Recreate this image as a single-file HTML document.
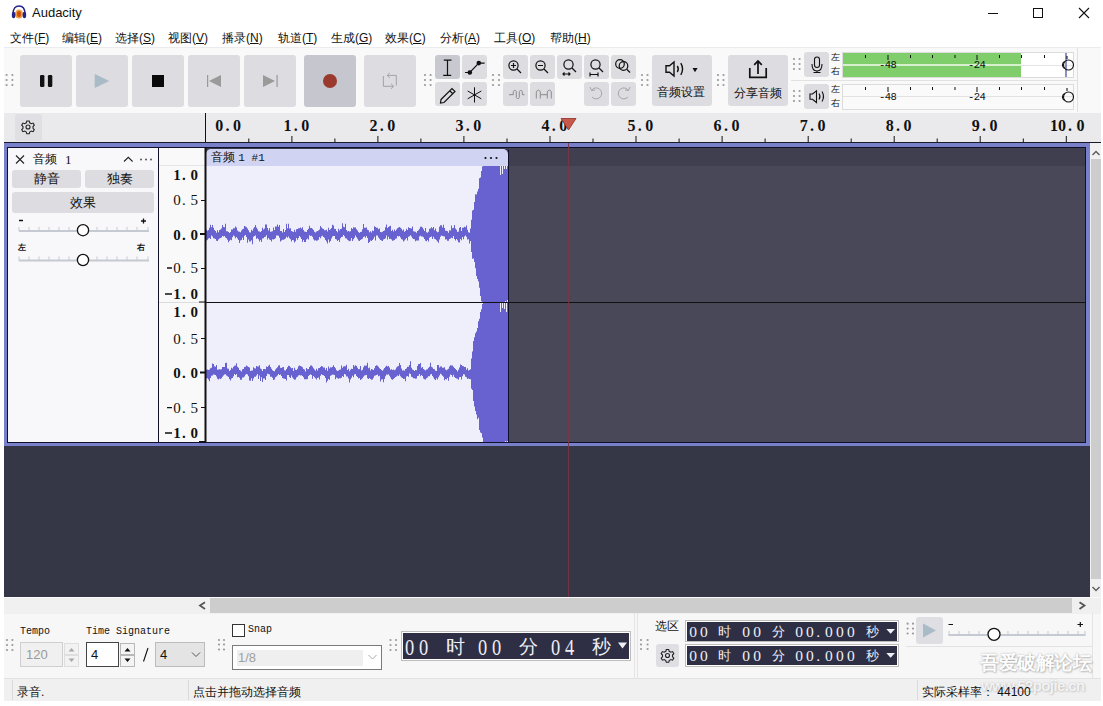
<!DOCTYPE html>
<html><head><meta charset="utf-8">
<style>
*{box-sizing:border-box}
html,body{margin:0;padding:0}
body{width:1103px;height:706px;overflow:hidden;background:#fff;position:relative;font-family:"Liberation Sans",sans-serif;color:#111}
.a{position:absolute}
.btn{position:absolute;background:#dcdce1;border-radius:3px}
.grip{position:absolute;width:8px;height:14px;background-image:radial-gradient(circle,#8a8a8a 0.9px,transparent 1.1px);background-size:5.5px 5px;background-position:0 0}
.menu span{position:absolute;top:31px;font-size:12px;line-height:14px;white-space:nowrap}
svg{position:absolute;overflow:visible}
i.c{display:inline-block;width:1em;text-align:center;font-style:normal}
.rl{position:absolute;top:114px;font-family:"Liberation Serif",serif;font-weight:bold;font-size:16px;line-height:24px;color:#111;white-space:nowrap}
.vl{position:absolute;font-family:"Liberation Mono",monospace;font-size:14.5px;line-height:14px;color:#111;white-space:nowrap;text-align:right;width:44px;left:156px}
.vl.b{font-weight:bold}
.vc{position:absolute;font-family:"Liberation Serif",serif;font-size:15px;line-height:20px;color:#111}
.td{font-family:"Liberation Serif",serif;color:#eeeef4;white-space:nowrap}
.tc{color:#eeeef4;white-space:nowrap}
</style></head><body>
<!-- TITLE BAR -->
<svg class="a" style="left:11px;top:5px" width="16" height="14" viewBox="0 0 16 14">
  <ellipse cx="8" cy="9" rx="4" ry="4.5" fill="#f0a040"/>
  <ellipse cx="8" cy="9" rx="2" ry="3" fill="#d05010"/>
  <path d="M2 9 C2 3 5 1 8 1 C11 1 14 3 14 9" fill="none" stroke="#24248a" stroke-width="1.6"/>
  <ellipse cx="2.6" cy="10" rx="1.8" ry="3.2" fill="#24248a"/>
  <ellipse cx="13.4" cy="10" rx="1.8" ry="3.2" fill="#24248a"/>
</svg>
<div class="a" style="left:32px;top:5px;font-size:13px;line-height:16px;color:#111">Audacity</div>
<div class="a" style="left:988px;top:13px;width:10px;height:1px;background:#111"></div>
<div class="a" style="left:1033px;top:8px;width:10px;height:10px;border:1px solid #111"></div>
<svg style="left:1079px;top:8px" width="10" height="10"><path d="M0 0L10 10M10 0L0 10" stroke="#111" stroke-width="1.1"/></svg>

<!-- MENU -->
<div class="menu">
<span style="left:10px"><i class="c">文</i><i class="c">件</i>(<u>F</u>)</span>
<span style="left:62px"><i class="c">编</i><i class="c">辑</i>(<u>E</u>)</span>
<span style="left:115px"><i class="c">选</i><i class="c">择</i>(<u>S</u>)</span>
<span style="left:168px"><i class="c">视</i><i class="c">图</i>(<u>V</u>)</span>
<span style="left:222px"><i class="c">播</i><i class="c">录</i>(<u>N</u>)</span>
<span style="left:278px"><i class="c">轨</i><i class="c">道</i>(<u>T</u>)</span>
<span style="left:331px"><i class="c">生</i><i class="c">成</i>(<u>G</u>)</span>
<span style="left:385px"><i class="c">效</i><i class="c">果</i>(<u>C</u>)</span>
<span style="left:440px"><i class="c">分</i><i class="c">析</i>(<u>A</u>)</span>
<span style="left:494px"><i class="c">工</i><i class="c">具</i>(<u>O</u>)</span>
<span style="left:550px"><i class="c">帮</i><i class="c">助</i>(<u>H</u>)</span>
</div>

<!-- TOOLBAR AREA -->
<div class="a" style="left:4px;top:47px;width:1097px;height:66px;background:#f9f9fa;border-top:1px solid #ececee"></div>
<!-- grips -->
<svg style="left:0;top:0" width="1103" height="706">
<g fill="#9a9a9a">
<circle cx="6.6" cy="75" r="1.1"/><circle cx="12.4" cy="75" r="1.1"/><circle cx="6.6" cy="80" r="1.1"/><circle cx="12.4" cy="80" r="1.1"/><circle cx="6.6" cy="85" r="1.1"/><circle cx="12.4" cy="85" r="1.1"/>
<circle cx="425" cy="75" r="1.1"/><circle cx="430.6" cy="75" r="1.1"/><circle cx="425" cy="80" r="1.1"/><circle cx="430.6" cy="80" r="1.1"/><circle cx="425" cy="85" r="1.1"/><circle cx="430.6" cy="85" r="1.1"/>
<circle cx="493" cy="75" r="1.1"/><circle cx="499" cy="75" r="1.1"/><circle cx="493" cy="80" r="1.1"/><circle cx="499" cy="80" r="1.1"/><circle cx="493" cy="85" r="1.1"/><circle cx="499" cy="85" r="1.1"/>
<circle cx="642" cy="75" r="1.1"/><circle cx="647.5" cy="75" r="1.1"/><circle cx="642" cy="80" r="1.1"/><circle cx="647.5" cy="80" r="1.1"/><circle cx="642" cy="85" r="1.1"/><circle cx="647.5" cy="85" r="1.1"/>
<circle cx="718" cy="75" r="1.1"/><circle cx="723.5" cy="75" r="1.1"/><circle cx="718" cy="80" r="1.1"/><circle cx="723.5" cy="80" r="1.1"/><circle cx="718" cy="85" r="1.1"/><circle cx="723.5" cy="85" r="1.1"/>
<circle cx="794" cy="59" r="1.1"/><circle cx="799.6" cy="59" r="1.1"/><circle cx="794" cy="64" r="1.1"/><circle cx="799.6" cy="64" r="1.1"/><circle cx="794" cy="69" r="1.1"/><circle cx="799.6" cy="69" r="1.1"/>
<circle cx="794" cy="91" r="1.1"/><circle cx="799.6" cy="91" r="1.1"/><circle cx="794" cy="96" r="1.1"/><circle cx="799.6" cy="96" r="1.1"/><circle cx="794" cy="101" r="1.1"/><circle cx="799.6" cy="101" r="1.1"/>
</g>
</svg>
<!-- transport buttons -->
<div class="btn" style="left:20px;top:55px;width:52px;height:52px"></div>
<div class="btn" style="left:76px;top:55px;width:52px;height:52px"></div>
<div class="btn" style="left:132px;top:55px;width:52px;height:52px"></div>
<div class="btn" style="left:188px;top:55px;width:52px;height:52px"></div>
<div class="btn" style="left:244px;top:55px;width:52px;height:52px"></div>
<div class="btn" style="left:304px;top:55px;width:52px;height:52px;background:#c6c6ce"></div>
<div class="btn" style="left:364px;top:55px;width:52px;height:52px"></div>
<svg style="left:0;top:0" width="1103" height="706">
<rect x="40" y="75" width="4.4" height="12" rx="1.3" fill="#111"/>
<rect x="47.9" y="75" width="4.4" height="12" rx="1.3" fill="#111"/>
<path d="M94.7 74 L109.3 81 L94.7 88 Z" fill="#a9bbc7"/>
<rect x="152" y="75" width="12" height="12" fill="#0a0a0a"/>
<rect x="207" y="75" width="1.2" height="12" fill="#9a9a9a"/>
<path d="M221 75 L209 81 L221 87 Z" fill="#9a9a9a"/>
<path d="M263 75 L275 81 L263 87 Z" fill="#9a9a9a"/>
<rect x="276.5" y="75" width="1.2" height="12" fill="#9a9a9a"/>
<circle cx="330" cy="81" r="7" fill="#9a3a2e"/>
<g fill="none" stroke="#a8a8a8" stroke-width="1">
<path d="M383.4 76 V86.3 H393.6 M391 83.8 L393.6 86.3 L391 88.8 M396.3 85.6 V75.4 H387.2 M389.8 72.9 L387.2 75.4 L389.8 77.9" stroke="#a4a4a4" stroke-width="1"/>
</g>
</svg>
<!-- tools -->
<div class="btn" style="left:435px;top:55px;width:25px;height:24px;background:#c8c8d0"></div>
<div class="btn" style="left:462px;top:55px;width:25px;height:24px"></div>
<div class="btn" style="left:435px;top:82px;width:25px;height:24px"></div>
<div class="btn" style="left:462px;top:82px;width:25px;height:24px"></div>
<div class="btn" style="left:503px;top:55px;width:25px;height:24px"></div>
<div class="btn" style="left:530px;top:55px;width:25px;height:24px"></div>
<div class="btn" style="left:557px;top:55px;width:25px;height:24px"></div>
<div class="btn" style="left:584px;top:55px;width:25px;height:24px"></div>
<div class="btn" style="left:611px;top:55px;width:25px;height:24px"></div>
<div class="btn" style="left:503px;top:82px;width:25px;height:24px"></div>
<div class="btn" style="left:530px;top:82px;width:25px;height:24px"></div>
<div class="btn" style="left:584px;top:82px;width:25px;height:24px"></div>
<div class="btn" style="left:611px;top:82px;width:25px;height:24px"></div>
<svg style="left:0;top:0" width="1103" height="706">
<g fill="none" stroke="#111" stroke-width="1.2">
<path d="M443.8 60.2 H451.5 M443.2 75.4 H451.2 M447.5 60.2 V75.4"/>
<path d="M465 72.5 H469.8 L478.8 63.1 H484.6"/>
<path d="M441 99.5 L452 88.5 L455 91.5 L444 102.5 L440.5 103 Z M449.5 90.5 L452.5 93.5"/>
<path d="M474.5 87.3 V102.5 M467.7 91 L481.3 98.8 M481.3 91 L467.7 98.8" stroke-width="1"/>
<circle cx="513.5" cy="65.5" r="4.6"/><path d="M517 69 L521 73 M511 65.5 H516 M513.5 63 V68"/>
<circle cx="540.5" cy="65.5" r="4.6"/><path d="M544 69 L548 73 M538 65.5 H543"/>
<circle cx="568.5" cy="64.5" r="4.6"/><path d="M572 68 L576 72 M563 74 H570 M564.5 72.5 L563 74 L564.5 75.5 M568.5 72.5 L570 74 L568.5 75.5"/>
<circle cx="595.5" cy="64.5" r="4.6"/><path d="M599 68 L603 72 M590 74.5 H598 M590 72.5 V76.5 M598 72.5 V76.5"/>
<circle cx="620" cy="64" r="4.3"/><circle cx="623.5" cy="66" r="4.3"/><path d="M627 69.5 L630 72.5"/>
</g>
<circle cx="469.8" cy="72.5" r="2.3" fill="#111"/><circle cx="478.8" cy="63.1" r="2.3" fill="#111"/>
<g fill="none" stroke="#a8a8a8" stroke-width="1">
<path d="M509 94.7H513.3V91.5Q514.8 88.5 516.3 91.5V97.5Q517.8 100.5 519.3 97.5V91.5Q520.8 88.5 522.3 91.5V94.7H524.5" stroke="#8c8c8c"/>
<path d="M536.3 98.5V91.5Q538.3 88.5 540.3 91.5V98.5M540.3 94.7H547.3M547.3 98.5V91.5Q549.3 88.5 551.3 91.5V98.5" stroke="#8c8c8c"/>
<path d="M592 97 A 5.5 5.5 0 1 0 591.5 90.5 M590 87 L591.5 90.5 L595 90"/>
<path d="M628 97 A 5.5 5.5 0 1 1 628.5 90.5 M630 87 L628.5 90.5 L625 90"/>
</g>
</svg>
<!-- audio setup / share -->
<div class="btn" style="left:652px;top:55px;width:60px;height:51px"></div>
<div class="btn" style="left:728px;top:55px;width:60px;height:51px"></div>
<svg style="left:0;top:0" width="1103" height="706">
<g fill="none" stroke="#111" stroke-width="1.2">
<path d="M666 65.8 H669.5 L674 62 V76 L669.5 72.2 H666 Z" stroke-width="1.4"/>
<path d="M677.3 66 Q679.3 69 677.3 72 M680.8 63.2 Q684.3 69 680.8 74.8" stroke-width="1.4"/>
<path d="M749.8 68 V77.3 H766.2 V68 M758 74 V61 M754.2 64.8 L758 61 L761.8 64.8" stroke-width="1.7"/>
</g>
<path d="M692.5 68 H697.6 L695 72.3 Z" fill="#111"/>
</svg>
<div class="a" style="left:657px;top:85px;font-size:12px;line-height:14px"><i class="c">音</i><i class="c">频</i><i class="c">设</i><i class="c">置</i></div>
<div class="a" style="left:734px;top:86px;font-size:12px;line-height:14px"><i class="c">分</i><i class="c">享</i><i class="c">音</i><i class="c">频</i></div>
<!-- meters -->
<div class="a" style="left:791px;top:80px;width:287px;height:1px;background:#e2e2e4"></div>
<div class="a" style="left:1077px;top:48px;width:1px;height:64px;background:#e0e0e2"></div>
<div class="btn" style="left:804px;top:52px;width:25px;height:25px"></div>
<div class="btn" style="left:804px;top:84px;width:25px;height:25px"></div>
<div class="a" style="left:842px;top:52px;width:232px;height:26px;border:1px solid #dcdcdc;background:#fff"></div>
<div class="a" style="left:842px;top:84px;width:232px;height:26px;border:1px solid #dcdcdc;background:#fafafa"></div>
<div class="a" style="left:843px;top:53px;width:178px;height:11px;background:#80cd6c"></div>
<div class="a" style="left:843px;top:66px;width:178px;height:11px;background:#80cd6c"></div>
<div class="a" style="left:843px;top:64px;width:178px;height:2px;background:#d6f0ce"></div>
<div class="a" style="left:1021px;top:65px;width:52px;height:1px;background:#e4e4e4"></div>
<div class="a" style="left:843px;top:96px;width:230px;height:1px;background:#e2e2e2"></div>
<svg style="left:0;top:0" width="1103" height="706">
<g stroke="#111" stroke-width="1">
<path d="M865.5 55V58 M888 55V60 M910.5 55V58 M932.5 55V58 M955 55V58 M977 55V60 M999.5 55V58 M1021.5 55V58 M1044.5 55V58"/>
<path d="M865.5 87V90 M888 87V92 M910.5 87V90 M932.5 87V90 M955 87V90 M977 87V92 M999.5 87V90 M1021.5 87V90 M1044.5 87V90"/>
</g>
<path d="M1066 53 V77" stroke="#5a64a8" stroke-width="1.4"/>
<g fill="none" stroke="#111" stroke-width="1.1">
<path d="M1067 59 V56"/><circle cx="1068.5" cy="65" r="5"/><path d="M1064.5 61.5 A4 4 0 0 0 1064.5 68.5"/>
<path d="M1067 91 V88"/><circle cx="1068.5" cy="97" r="5"/><path d="M1064.5 93.5 A4 4 0 0 0 1064.5 100.5"/>
</g>
<g fill="none" stroke="#111" stroke-width="1.1">
<rect x="814.5" y="57" width="5" height="10.5" rx="2.5"/>
<path d="M812 64 Q812 71 817 71 Q822 71 822 64 M817 71 V72.5 M813.5 72.5 H820.5"/>
<path d="M810 94 H812.5 L816.5 90.8 V102.5 L812.5 99.3 H810 Z"/>
<path d="M819 93.5 Q821 96.5 819 99.5 M822 91.5 Q825 96.5 822 101.5"/>
</g>
</svg>
<div class="a" style="left:831px;top:52px;font-size:9px;line-height:11px"><i class="c">左</i></div>
<div class="a" style="left:831px;top:66px;font-size:9px;line-height:11px"><i class="c">右</i></div>
<div class="a" style="left:831px;top:84px;font-size:9px;line-height:11px"><i class="c">左</i></div>
<div class="a" style="left:831px;top:98px;font-size:9px;line-height:11px"><i class="c">右</i></div>
<div class="a" style="left:879px;top:60px;font-family:'Liberation Mono',monospace;font-size:10.5px;line-height:11px;letter-spacing:-0.5px">-48</div>
<div class="a" style="left:968px;top:60px;font-family:'Liberation Mono',monospace;font-size:10.5px;line-height:11px;letter-spacing:-0.5px">-24</div>
<div class="a" style="left:879px;top:92px;font-family:'Liberation Mono',monospace;font-size:10.5px;line-height:11px;letter-spacing:-0.5px">-48</div>
<div class="a" style="left:968px;top:92px;font-family:'Liberation Mono',monospace;font-size:10.5px;line-height:11px;letter-spacing:-0.5px">-24</div>

<!-- RULER -->
<div class="a" style="left:4px;top:113px;width:1097px;height:30px;background:#eaeaec"></div>
<div class="btn" style="left:15px;top:114px;width:27px;height:27px;background:#e0e0e4"></div>
<svg style="left:0;top:0" width="1103" height="706">
<g transform="translate(28,127)" fill="none" stroke="#222" stroke-width="1.1">
<path d="M-1.2 -6 h2.4 l0.5 1.8 l1.6 0.9 l1.8 -0.6 l1.2 2.1 l-1.3 1.3 v1.8 l1.3 1.3 l-1.2 2.1 l-1.8 -0.6 l-1.6 0.9 l-0.5 1.8 h-2.4 l-0.5 -1.8 l-1.6 -0.9 l-1.8 0.6 l-1.2 -2.1 l1.3 -1.3 v-1.8 l-1.3 -1.3 l1.2 -2.1 l1.8 0.6 l1.6 -0.9 z"/>
<circle r="2"/>
</g>
<path d="M205.5 113 V143" stroke="#111" stroke-width="1"/>
<rect x="4" y="142" width="1097" height="1.3" fill="#1a1a2a"/>
</svg>
<svg style="left:0;top:0" width="1103" height="706"><path d="M291.9 136V142 M377.9 136V142 M463.9 136V142 M550.0 136V142 M636.0 136V142 M722.1 136V142 M808.2 136V142 M894.2 136V142 M980.2 136V142 M1066.3 136V142 M248.8 138.5V142 M334.9 138.5V142 M420.9 138.5V142 M507.0 138.5V142 M593.0 138.5V142 M679.1 138.5V142 M765.1 138.5V142 M851.2 138.5V142 M937.2 138.5V142 M1023.3 138.5V142" stroke="#111" stroke-width="1"/></svg>
<div class="rl" style="left:215.2px">0</div>
<div class="rl" style="left:225.5px">.</div>
<div class="rl" style="left:233.0px">0</div>
<div class="rl" style="left:283.4px">1</div>
<div class="rl" style="left:293.7px">.</div>
<div class="rl" style="left:301.2px">0</div>
<div class="rl" style="left:369.4px">2</div>
<div class="rl" style="left:379.7px">.</div>
<div class="rl" style="left:387.2px">0</div>
<div class="rl" style="left:455.4px">3</div>
<div class="rl" style="left:465.7px">.</div>
<div class="rl" style="left:473.3px">0</div>
<div class="rl" style="left:541.5px">4</div>
<div class="rl" style="left:551.8px">.</div>
<div class="rl" style="left:559.3px">0</div>
<div class="rl" style="left:627.5px">5</div>
<div class="rl" style="left:637.8px">.</div>
<div class="rl" style="left:645.3px">0</div>
<div class="rl" style="left:713.6px">6</div>
<div class="rl" style="left:723.9px">.</div>
<div class="rl" style="left:731.4px">0</div>
<div class="rl" style="left:799.7px">7</div>
<div class="rl" style="left:810.0px">.</div>
<div class="rl" style="left:817.5px">0</div>
<div class="rl" style="left:885.7px">8</div>
<div class="rl" style="left:896.0px">.</div>
<div class="rl" style="left:903.5px">0</div>
<div class="rl" style="left:971.7px">9</div>
<div class="rl" style="left:982.0px">.</div>
<div class="rl" style="left:989.5px">0</div>
<div class="rl" style="left:1050.1px">1</div>
<div class="rl" style="left:1058.1px">0</div>
<div class="rl" style="left:1067.9px">.</div>
<div class="rl" style="left:1076.5px">0</div>


<!-- TRACK AREA -->
<div class="a" style="left:4px;top:143px;width:1086px;height:303px;background:#7880ca"></div>
<div class="a" style="left:7px;top:147px;width:1079px;height:296px;background:#10102a"></div>
<div class="a" style="left:8px;top:148px;width:150px;height:294px;background:#f8f8fa"></div>
<div class="a" style="left:159px;top:148px;width:46px;height:294px;background:#f9f9fa"></div>
<div class="a" style="left:159px;top:165px;width:46px;height:1px;background:#e6e6e8"></div>
<div class="a" style="left:159px;top:302px;width:46px;height:1px;background:#dcdcdc"></div>
<div class="a" style="left:206px;top:148px;width:302px;height:294px;background:#eeeffb"></div>
<div class="a" style="left:206px;top:148px;width:303px;height:18px;background:#3a3a4c"></div>
<div class="a" style="left:206px;top:149px;width:302px;height:17px;background:#d0d4f2;border-radius:5px 5px 0 0"></div>
<div class="a" style="left:509px;top:148px;width:576px;height:18px;background:#3f3f50"></div>
<div class="a" style="left:509px;top:166px;width:576px;height:276px;background:#484859"></div>
<div class="a" style="left:206px;top:302px;width:879px;height:1px;background:#111"></div>
<div class="a" style="left:508px;top:150px;width:1px;height:292px;background:#10102a"></div>
<!-- empty dark area -->
<div class="a" style="left:4px;top:446px;width:1086px;height:151px;background:#353747"></div>
<!-- vertical scrollbar -->
<div class="a" style="left:1090px;top:143px;width:11px;height:454px;background:#f0f0f0"></div>
<div class="a" style="left:1091px;top:159px;width:10px;height:420px;background:#cdcdcd"></div>
<svg style="left:0;top:0" width="1103" height="706">
<path d="M1092.5 155 L1096 151.5 L1099.5 155" fill="none" stroke="#606060" stroke-width="1.5"/>
<path d="M1092.5 587 L1096 590.5 L1099.5 587" fill="none" stroke="#606060" stroke-width="1.5"/>
</svg>
<!-- play head line -->
<div class="a" style="left:568px;top:143px;width:1px;height:454px;background:#7a3446;opacity:0.9"></div>
<svg style="left:0;top:0" width="1103" height="706">
<path d="M561 118.5 L576 118.5 L568.5 130 Z" fill="#c8584a" stroke="#8a3028" stroke-width="0.8"/>
</svg>
<svg style="left:0;top:0" width="1103" height="706"><path d="M206 229.6h1V240.6h-1ZM207 230.7h1V239.7h-1ZM208 229.9h1V238.5h-1ZM209 227.7h1V237.9h-1ZM210 224.7h1V238.9h-1ZM211 227.3h1V235.6h-1ZM212 225.1h1V236.5h-1ZM213 227.8h1V238.3h-1ZM214 230.0h1V238.6h-1ZM215 230.9h1V239.0h-1ZM216 232.7h1V240.8h-1ZM217 230.3h1V241.0h-1ZM218 232.2h1V239.5h-1ZM219 230.1h1V238.5h-1ZM220 229.5h1V238.0h-1ZM221 228.4h1V237.5h-1ZM222 224.9h1V235.9h-1ZM223 226.9h1V236.6h-1ZM224 227.2h1V235.9h-1ZM225 223.8h1V237.5h-1ZM226 231.2h1V238.2h-1ZM227 231.2h1V239.7h-1ZM228 232.1h1V242.2h-1ZM229 233.0h1V240.7h-1ZM230 231.9h1V239.7h-1ZM231 229.4h1V240.3h-1ZM232 229.4h1V237.2h-1ZM233 228.3h1V235.5h-1ZM234 228.2h1V236.2h-1ZM235 226.4h1V238.3h-1ZM236 227.4h1V237.0h-1ZM237 230.5h1V238.6h-1ZM238 231.4h1V240.0h-1ZM239 231.8h1V243.1h-1ZM240 232.3h1V240.4h-1ZM241 230.5h1V239.9h-1ZM242 229.2h1V237.8h-1ZM243 228.7h1V240.0h-1ZM244 226.0h1V235.8h-1ZM245 226.6h1V235.1h-1ZM246 227.3h1V236.9h-1ZM247 228.5h1V242.7h-1ZM248 230.3h1V239.5h-1ZM249 232.2h1V241.6h-1ZM250 232.5h1V241.4h-1ZM251 229.7h1V240.3h-1ZM252 230.8h1V244.2h-1ZM253 228.5h1V236.7h-1ZM254 227.0h1V236.1h-1ZM255 225.0h1V235.6h-1ZM256 227.5h1V238.7h-1ZM257 229.2h1V238.2h-1ZM258 231.3h1V239.3h-1ZM259 231.5h1V241.6h-1ZM260 232.1h1V240.1h-1ZM261 231.0h1V241.9h-1ZM262 227.7h1V238.5h-1ZM263 229.4h1V238.3h-1ZM264 228.4h1V236.9h-1ZM265 224.5h1V236.8h-1ZM266 224.5h1V235.3h-1ZM267 228.0h1V239.6h-1ZM268 230.6h1V237.9h-1ZM269 228.3h1V239.6h-1ZM270 231.7h1V239.9h-1ZM271 231.4h1V241.4h-1ZM272 231.2h1V239.3h-1ZM273 227.5h1V239.4h-1ZM274 230.1h1V238.9h-1ZM275 226.5h1V238.2h-1ZM276 226.6h1V235.4h-1ZM277 224.4h1V235.4h-1ZM278 226.8h1V235.8h-1ZM279 225.1h1V237.8h-1ZM280 230.9h1V241.4h-1ZM281 231.0h1V240.4h-1ZM282 232.4h1V239.7h-1ZM283 228.9h1V239.8h-1ZM284 231.9h1V239.3h-1ZM285 230.0h1V238.4h-1ZM286 223.7h1V236.8h-1ZM287 228.3h1V237.7h-1ZM288 223.8h1V236.4h-1ZM289 228.4h1V238.3h-1ZM290 228.3h1V239.2h-1ZM291 231.0h1V241.6h-1ZM292 231.6h1V239.9h-1ZM293 231.9h1V240.3h-1ZM294 229.8h1V242.4h-1ZM295 231.8h1V241.3h-1ZM296 229.3h1V238.1h-1ZM297 229.1h1V239.8h-1ZM298 228.3h1V237.9h-1ZM299 228.2h1V236.0h-1ZM300 227.4h1V237.3h-1ZM301 228.5h1V238.9h-1ZM302 227.2h1V241.9h-1ZM303 230.1h1V239.9h-1ZM304 231.5h1V242.0h-1ZM305 231.7h1V241.9h-1ZM306 231.9h1V239.6h-1ZM307 230.0h1V238.6h-1ZM308 228.8h1V239.5h-1ZM309 225.7h1V235.3h-1ZM310 227.9h1V236.1h-1ZM311 228.0h1V235.8h-1ZM312 228.8h1V236.8h-1ZM313 229.9h1V239.2h-1ZM314 231.8h1V240.6h-1ZM315 232.6h1V240.2h-1ZM316 231.6h1V240.7h-1ZM317 230.9h1V240.6h-1ZM318 230.5h1V239.8h-1ZM319 229.6h1V237.0h-1ZM320 226.1h1V238.3h-1ZM321 227.5h1V236.2h-1ZM322 228.4h1V235.8h-1ZM323 228.9h1V237.1h-1ZM324 230.2h1V237.7h-1ZM325 230.3h1V239.9h-1ZM326 229.8h1V241.5h-1ZM327 231.6h1V243.5h-1ZM328 227.7h1V239.6h-1ZM329 229.9h1V242.6h-1ZM330 229.2h1V241.0h-1ZM331 228.1h1V238.6h-1ZM332 224.7h1V236.6h-1ZM333 225.6h1V236.0h-1ZM334 228.7h1V236.1h-1ZM335 229.1h1V239.1h-1ZM336 231.0h1V239.4h-1ZM337 232.3h1V241.0h-1ZM338 228.8h1V240.1h-1ZM339 230.4h1V242.0h-1ZM340 229.0h1V238.3h-1ZM341 228.8h1V237.1h-1ZM342 223.2h1V236.8h-1ZM343 226.7h1V235.1h-1ZM344 227.2h1V236.3h-1ZM345 223.7h1V238.2h-1ZM346 230.1h1V238.6h-1ZM347 231.6h1V239.7h-1ZM348 230.9h1V240.4h-1ZM349 231.6h1V241.2h-1ZM350 231.2h1V240.8h-1ZM351 228.0h1V238.0h-1ZM352 228.9h1V240.9h-1ZM353 227.3h1V239.2h-1ZM354 227.5h1V237.7h-1ZM355 227.5h1V235.6h-1ZM356 229.2h1V237.3h-1ZM357 230.6h1V238.8h-1ZM358 231.9h1V240.4h-1ZM359 232.9h1V241.0h-1ZM360 232.0h1V240.0h-1ZM361 231.8h1V239.3h-1ZM362 229.2h1V238.8h-1ZM363 224.1h1V237.1h-1ZM364 227.7h1V236.5h-1ZM365 227.7h1V237.7h-1ZM366 227.5h1V236.0h-1ZM367 229.7h1V238.0h-1ZM368 230.2h1V243.1h-1ZM369 232.3h1V242.1h-1ZM370 231.3h1V240.6h-1ZM371 232.6h1V240.9h-1ZM372 230.5h1V240.0h-1ZM373 230.9h1V238.7h-1ZM374 226.3h1V236.8h-1ZM375 227.1h1V240.4h-1ZM376 227.7h1V235.6h-1ZM377 227.8h1V235.6h-1ZM378 229.2h1V237.6h-1ZM379 228.4h1V238.8h-1ZM380 231.9h1V239.9h-1ZM381 232.2h1V240.5h-1ZM382 231.8h1V241.0h-1ZM383 230.9h1V239.4h-1ZM384 230.4h1V239.1h-1ZM385 227.2h1V238.3h-1ZM386 224.5h1V235.6h-1ZM387 227.9h1V239.4h-1ZM388 226.9h1V236.7h-1ZM389 226.2h1V239.0h-1ZM390 225.7h1V238.7h-1ZM391 231.1h1V239.6h-1ZM392 229.7h1V240.8h-1ZM393 231.6h1V240.6h-1ZM394 229.5h1V240.1h-1ZM395 230.9h1V238.7h-1ZM396 229.6h1V238.4h-1ZM397 228.3h1V235.9h-1ZM398 227.5h1V236.4h-1ZM399 227.1h1V235.9h-1ZM400 227.8h1V237.4h-1ZM401 228.8h1V239.2h-1ZM402 230.4h1V239.4h-1ZM403 229.4h1V241.4h-1ZM404 231.7h1V240.6h-1ZM405 230.9h1V239.3h-1ZM406 228.7h1V238.1h-1ZM407 230.0h1V240.4h-1ZM408 227.3h1V236.7h-1ZM409 227.9h1V236.2h-1ZM410 228.2h1V235.3h-1ZM411 228.4h1V236.5h-1ZM412 226.5h1V238.3h-1ZM413 231.2h1V239.1h-1ZM414 231.5h1V239.2h-1ZM415 231.7h1V241.2h-1ZM416 232.7h1V240.6h-1ZM417 231.1h1V240.4h-1ZM418 230.2h1V240.6h-1ZM419 228.8h1V236.4h-1ZM420 226.8h1V235.8h-1ZM421 226.7h1V236.5h-1ZM422 227.4h1V236.4h-1ZM423 229.2h1V237.3h-1ZM424 231.0h1V239.0h-1ZM425 228.1h1V240.7h-1ZM426 232.2h1V241.3h-1ZM427 232.7h1V239.9h-1ZM428 231.8h1V241.6h-1ZM429 228.8h1V237.8h-1ZM430 228.5h1V236.9h-1ZM431 227.2h1V236.6h-1ZM432 228.2h1V238.9h-1ZM433 226.9h1V236.7h-1ZM434 230.2h1V238.7h-1ZM435 228.5h1V239.2h-1ZM436 231.3h1V240.2h-1ZM437 232.2h1V241.4h-1ZM438 231.8h1V242.7h-1ZM439 226.8h1V239.5h-1ZM440 225.3h1V236.7h-1ZM441 225.2h1V235.4h-1ZM442 227.5h1V236.1h-1ZM443 224.7h1V236.2h-1ZM444 228.1h1V236.6h-1ZM445 230.7h1V239.6h-1ZM446 230.8h1V239.3h-1ZM447 231.3h1V240.7h-1ZM448 232.7h1V240.8h-1ZM449 230.3h1V239.0h-1ZM450 230.5h1V238.4h-1ZM451 225.5h1V237.7h-1ZM452 228.3h1V238.2h-1ZM453 227.8h1V236.0h-1ZM454 225.0h1V238.9h-1ZM455 228.6h1V240.5h-1ZM456 229.7h1V239.1h-1ZM457 231.9h1V240.2h-1ZM458 231.5h1V242.3h-1ZM459 227.7h1V242.4h-1ZM460 227.0h1V239.0h-1ZM461 230.9h1V240.3h-1ZM462 227.7h1V236.9h-1ZM463 227.8h1V239.3h-1ZM464 226.7h1V236.4h-1ZM465 227.3h1V235.5h-1ZM466 225.4h1V236.8h-1ZM467 229.8h1V239.5h-1ZM468 232.2h1V239.2h-1ZM469 232.7h1V243.4h-1ZM470 230.9h1V241.0h-1ZM470 228.5h1V236.6h-1ZM471 219.7h1V252.0h-1ZM472 210.5h1V258.7h-1ZM473 209.8h1V258.5h-1ZM474 202.0h1V262.1h-1ZM475 194.3h1V268.3h-1ZM476 194.6h1V276.0h-1ZM477 191.6h1V279.1h-1ZM478 188.8h1V281.6h-1ZM479 178.2h1V287.7h-1ZM480 177.5h1V295.9h-1ZM481 171.1h1V301.3h-1ZM482 166.5h1V302.0h-1ZM483 166.0h1V302.0h-1ZM483 166.0h1V302.0h-1ZM484 166.0h1V302.0h-1ZM485 166.0h1V302.0h-1ZM486 166.0h1V302.0h-1ZM487 166.0h1V302.0h-1ZM488 166.0h1V302.0h-1ZM489 166.0h1V302.0h-1ZM490 166.0h1V302.0h-1ZM491 166.0h1V302.0h-1ZM492 166.0h1V302.0h-1ZM493 166.0h1V302.0h-1ZM494 166.0h1V302.0h-1ZM495 166.0h1V302.0h-1ZM496 166.0h1V302.0h-1ZM497 166.0h1V302.0h-1ZM498 166.0h1V302.0h-1ZM499 166.0h1V302.0h-1ZM500 175.0h1V302.0h-1ZM501 166.0h1V302.0h-1ZM502 174.0h1V302.0h-1ZM503 166.0h1V302.0h-1ZM504 169.0h1V302.0h-1ZM505 166.0h1V301.0h-1ZM506 169.0h1V302.0h-1ZM507 166.0h1V300.0h-1ZM206 369.7h1V378.5h-1ZM207 369.6h1V378.2h-1ZM208 369.9h1V379.4h-1ZM209 369.5h1V381.3h-1ZM210 368.3h1V378.0h-1ZM211 367.7h1V375.8h-1ZM212 363.5h1V375.4h-1ZM213 364.0h1V374.4h-1ZM214 366.2h1V374.7h-1ZM215 366.7h1V374.9h-1ZM216 364.9h1V376.6h-1ZM217 369.7h1V378.7h-1ZM218 369.6h1V379.6h-1ZM219 369.3h1V378.5h-1ZM220 369.4h1V378.9h-1ZM221 369.2h1V378.2h-1ZM222 367.0h1V376.7h-1ZM223 367.0h1V375.6h-1ZM224 366.9h1V374.4h-1ZM225 363.1h1V374.3h-1ZM226 362.8h1V375.5h-1ZM227 368.4h1V376.2h-1ZM228 368.8h1V377.0h-1ZM229 371.1h1V378.9h-1ZM230 369.9h1V380.6h-1ZM231 367.8h1V378.6h-1ZM232 368.5h1V378.0h-1ZM233 366.8h1V376.3h-1ZM234 365.8h1V373.9h-1ZM235 365.4h1V375.0h-1ZM236 363.3h1V374.0h-1ZM237 366.8h1V377.3h-1ZM238 367.8h1V376.9h-1ZM239 370.0h1V377.7h-1ZM240 370.5h1V379.7h-1ZM241 371.5h1V379.8h-1ZM242 369.2h1V377.6h-1ZM243 369.1h1V377.6h-1ZM244 367.0h1V376.6h-1ZM245 366.8h1V374.7h-1ZM246 365.5h1V374.0h-1ZM247 366.2h1V374.4h-1ZM248 367.0h1V376.2h-1ZM249 367.5h1V380.4h-1ZM250 370.9h1V380.8h-1ZM251 370.6h1V378.3h-1ZM252 370.5h1V381.0h-1ZM253 367.2h1V378.6h-1ZM254 368.3h1V376.7h-1ZM255 368.4h1V376.7h-1ZM256 366.0h1V375.5h-1ZM257 366.5h1V374.1h-1ZM258 366.6h1V379.0h-1ZM259 365.2h1V375.6h-1ZM260 368.4h1V381.0h-1ZM261 369.2h1V377.2h-1ZM262 371.1h1V382.0h-1ZM263 369.1h1V378.6h-1ZM264 368.9h1V378.4h-1ZM265 369.3h1V380.0h-1ZM266 366.5h1V375.9h-1ZM267 366.9h1V373.8h-1ZM268 365.7h1V374.0h-1ZM269 364.8h1V374.6h-1ZM270 366.9h1V376.8h-1ZM271 368.8h1V376.7h-1ZM272 370.3h1V377.7h-1ZM273 371.1h1V380.1h-1ZM274 371.3h1V379.5h-1ZM275 369.5h1V377.2h-1ZM276 368.3h1V376.5h-1ZM277 367.3h1V375.5h-1ZM278 365.4h1V374.1h-1ZM279 365.3h1V375.0h-1ZM280 367.7h1V374.6h-1ZM281 367.9h1V376.0h-1ZM282 367.2h1V378.0h-1ZM283 367.0h1V378.5h-1ZM284 370.3h1V378.8h-1ZM285 370.4h1V378.9h-1ZM286 369.1h1V380.6h-1ZM287 367.2h1V375.1h-1ZM288 365.8h1V374.9h-1ZM289 365.9h1V377.0h-1ZM290 367.2h1V378.1h-1ZM291 368.3h1V375.5h-1ZM292 368.1h1V377.6h-1ZM293 370.9h1V378.8h-1ZM294 367.7h1V379.8h-1ZM295 369.8h1V379.5h-1ZM296 370.1h1V377.4h-1ZM297 368.8h1V376.8h-1ZM298 366.3h1V375.6h-1ZM299 365.6h1V375.1h-1ZM300 366.0h1V375.4h-1ZM301 366.5h1V375.2h-1ZM302 367.3h1V376.1h-1ZM303 369.1h1V377.2h-1ZM304 369.6h1V379.2h-1ZM305 371.5h1V379.3h-1ZM306 367.9h1V379.3h-1ZM307 369.2h1V378.9h-1ZM308 369.0h1V375.9h-1ZM309 367.0h1V375.0h-1ZM310 365.5h1V374.2h-1ZM311 365.5h1V375.0h-1ZM312 366.4h1V378.8h-1ZM313 368.2h1V375.9h-1ZM314 369.6h1V377.2h-1ZM315 370.7h1V378.3h-1ZM316 368.7h1V379.4h-1ZM317 370.4h1V378.1h-1ZM318 368.3h1V377.6h-1ZM319 368.1h1V379.5h-1ZM320 367.0h1V375.8h-1ZM321 365.9h1V374.3h-1ZM322 366.6h1V375.1h-1ZM323 367.5h1V375.3h-1ZM324 367.5h1V376.0h-1ZM325 369.7h1V377.9h-1ZM326 368.0h1V382.4h-1ZM327 370.8h1V380.8h-1ZM328 366.6h1V379.0h-1ZM329 368.6h1V379.7h-1ZM330 367.2h1V375.8h-1ZM331 367.4h1V375.2h-1ZM332 366.7h1V374.6h-1ZM333 365.3h1V374.8h-1ZM334 367.1h1V375.0h-1ZM335 368.2h1V379.2h-1ZM336 370.2h1V377.5h-1ZM337 371.1h1V378.3h-1ZM338 370.5h1V378.7h-1ZM339 369.8h1V378.2h-1ZM340 369.5h1V378.2h-1ZM341 365.4h1V377.7h-1ZM342 367.7h1V376.1h-1ZM343 366.6h1V377.0h-1ZM344 366.3h1V374.1h-1ZM345 366.3h1V374.4h-1ZM346 364.7h1V376.5h-1ZM347 369.9h1V376.6h-1ZM348 368.8h1V378.5h-1ZM349 371.3h1V382.4h-1ZM350 369.8h1V379.4h-1ZM351 368.7h1V377.8h-1ZM352 369.1h1V375.8h-1ZM353 364.9h1V377.2h-1ZM354 366.5h1V374.6h-1ZM355 365.3h1V374.0h-1ZM356 366.0h1V375.9h-1ZM357 367.8h1V376.9h-1ZM358 369.2h1V378.4h-1ZM359 368.9h1V378.0h-1ZM360 366.1h1V380.0h-1ZM361 370.5h1V379.2h-1ZM362 369.8h1V378.2h-1ZM363 367.3h1V376.8h-1ZM364 365.4h1V375.4h-1ZM365 365.7h1V375.3h-1ZM366 365.6h1V375.0h-1ZM367 362.8h1V378.3h-1ZM368 368.2h1V378.9h-1ZM369 367.4h1V377.9h-1ZM370 370.5h1V379.1h-1ZM371 369.1h1V379.7h-1ZM372 369.4h1V379.6h-1ZM373 370.0h1V377.7h-1ZM374 368.3h1V375.7h-1ZM375 366.0h1V375.6h-1ZM376 365.2h1V374.9h-1ZM377 365.8h1V374.5h-1ZM378 366.8h1V376.2h-1ZM379 368.3h1V375.8h-1ZM380 369.0h1V381.5h-1ZM381 370.1h1V379.5h-1ZM382 370.7h1V379.3h-1ZM383 369.6h1V382.3h-1ZM384 368.1h1V379.0h-1ZM385 366.8h1V376.2h-1ZM386 365.7h1V374.4h-1ZM387 366.6h1V374.8h-1ZM388 366.1h1V374.2h-1ZM389 367.5h1V375.8h-1ZM390 369.7h1V377.4h-1ZM391 369.2h1V379.2h-1ZM392 370.1h1V379.8h-1ZM393 369.5h1V379.1h-1ZM394 370.2h1V378.0h-1ZM395 369.4h1V376.9h-1ZM396 367.4h1V376.4h-1ZM397 366.5h1V375.4h-1ZM398 366.1h1V375.9h-1ZM399 362.9h1V374.5h-1ZM400 365.0h1V376.3h-1ZM401 368.5h1V377.4h-1ZM402 370.4h1V378.0h-1ZM403 370.3h1V378.9h-1ZM404 370.7h1V378.8h-1ZM405 369.1h1V381.3h-1ZM406 368.5h1V376.4h-1ZM407 366.7h1V376.1h-1ZM408 366.7h1V376.7h-1ZM409 365.1h1V373.5h-1ZM410 361.2h1V374.1h-1ZM411 367.8h1V376.7h-1ZM412 369.6h1V377.3h-1ZM413 370.0h1V378.2h-1ZM414 371.1h1V378.3h-1ZM415 370.0h1V378.7h-1ZM416 370.2h1V378.5h-1ZM417 365.9h1V375.9h-1ZM418 363.9h1V375.7h-1ZM419 364.0h1V374.1h-1ZM420 362.9h1V376.2h-1ZM421 367.8h1V375.0h-1ZM422 367.1h1V376.0h-1ZM423 368.9h1V378.6h-1ZM424 369.8h1V379.3h-1ZM425 370.4h1V379.4h-1ZM426 369.5h1V378.3h-1ZM427 369.2h1V377.5h-1ZM428 367.7h1V376.3h-1ZM429 366.7h1V376.3h-1ZM430 362.7h1V374.6h-1ZM431 366.7h1V373.9h-1ZM432 367.6h1V376.1h-1ZM433 368.9h1V377.4h-1ZM434 369.3h1V379.2h-1ZM435 370.8h1V380.0h-1ZM436 370.9h1V378.2h-1ZM437 365.0h1V379.6h-1ZM438 365.0h1V377.3h-1ZM439 367.5h1V375.6h-1ZM440 366.5h1V373.7h-1ZM441 366.6h1V374.6h-1ZM442 367.7h1V375.7h-1ZM443 367.7h1V376.8h-1ZM444 367.2h1V380.2h-1ZM445 369.6h1V379.0h-1ZM446 370.3h1V379.4h-1ZM447 369.4h1V378.0h-1ZM448 368.7h1V380.8h-1ZM449 366.5h1V376.7h-1ZM450 365.2h1V374.6h-1ZM451 365.6h1V375.1h-1ZM452 365.6h1V376.7h-1ZM453 366.7h1V374.7h-1ZM454 367.9h1V377.1h-1ZM455 369.0h1V378.1h-1ZM456 369.9h1V378.6h-1ZM457 371.6h1V378.8h-1ZM458 369.7h1V379.7h-1ZM459 367.6h1V377.2h-1ZM460 364.5h1V377.0h-1ZM461 365.0h1V379.5h-1ZM462 366.1h1V376.3h-1ZM463 366.2h1V374.3h-1ZM464 366.9h1V374.5h-1ZM465 366.9h1V376.8h-1ZM466 369.7h1V377.3h-1ZM467 368.2h1V379.1h-1ZM468 370.4h1V378.6h-1ZM469 370.0h1V379.1h-1ZM470 369.3h1V379.2h-1ZM470 370.7h1V374.5h-1ZM471 358.4h1V388.8h-1ZM472 351.6h1V390.0h-1ZM473 341.1h1V401.0h-1ZM474 337.2h1V406.5h-1ZM475 333.3h1V411.1h-1ZM476 331.5h1V414.4h-1ZM477 328.1h1V419.3h-1ZM478 321.2h1V417.8h-1ZM479 318.7h1V430.1h-1ZM480 312.1h1V432.4h-1ZM481 309.2h1V433.2h-1ZM482 304.1h1V437.6h-1ZM483 303.0h1V442.0h-1ZM483 303.0h1V442.0h-1ZM484 303.0h1V442.0h-1ZM485 303.0h1V442.0h-1ZM486 303.0h1V442.0h-1ZM487 303.0h1V442.0h-1ZM488 303.0h1V442.0h-1ZM489 303.0h1V442.0h-1ZM490 303.0h1V442.0h-1ZM491 303.0h1V442.0h-1ZM492 303.0h1V442.0h-1ZM493 303.0h1V442.0h-1ZM494 303.0h1V442.0h-1ZM495 303.0h1V442.0h-1ZM496 303.0h1V442.0h-1ZM497 303.0h1V442.0h-1ZM498 303.0h1V442.0h-1ZM499 303.0h1V442.0h-1ZM500 312.0h1V442.0h-1ZM501 303.0h1V442.0h-1ZM502 308.0h1V442.0h-1ZM503 303.0h1V442.0h-1ZM504 309.0h1V442.0h-1ZM505 303.0h1V441.0h-1ZM506 312.0h1V442.0h-1ZM507 303.0h1V441.0h-1Z" fill="#6862d0"/></svg>

<!-- clip header text -->
<div class="a" style="left:211px;top:150px;font-size:12px;line-height:15px;color:#111"><i class="c">音</i><i class="c">频</i> <span style="font-family:'Liberation Mono';font-size:11px">1 #1</span></div>
<svg style="left:0;top:0" width="1103" height="706"><g fill="#111"><circle cx="485.5" cy="158" r="1.1"/><circle cx="491" cy="158" r="1.1"/><circle cx="496.5" cy="158" r="1.1"/></g></svg>
<!-- vertical ruler -->
<div class="vc" style="left:173.2px;top:164.5px;font-weight:bold">1</div>
<div class="vc" style="left:182px;top:164.5px;font-weight:bold">.</div>
<div class="vc" style="left:190.5px;top:164.5px;font-weight:bold">0</div>
<div class="vc" style="left:173.2px;top:190.0px;font-weight:normal">0</div>
<div class="vc" style="left:182px;top:190.0px;font-weight:normal">.</div>
<div class="vc" style="left:190.5px;top:190.0px;font-weight:normal">5</div>
<div class="vc" style="left:173.2px;top:224.6px;font-weight:bold">0</div>
<div class="vc" style="left:182px;top:224.6px;font-weight:bold">.</div>
<div class="vc" style="left:190.5px;top:224.6px;font-weight:bold">0</div>
<div class="vc" style="left:173.2px;top:258.0px;font-weight:normal">0</div>
<div class="vc" style="left:182px;top:258.0px;font-weight:normal">.</div>
<div class="vc" style="left:190.5px;top:258.0px;font-weight:normal">5</div>
<div class="vc" style="left:173.2px;top:284.0px;font-weight:bold">1</div>
<div class="vc" style="left:182px;top:284.0px;font-weight:bold">.</div>
<div class="vc" style="left:190.5px;top:284.0px;font-weight:bold">0</div>
<div class="vc" style="left:173.2px;top:302.0px;font-weight:bold">1</div>
<div class="vc" style="left:182px;top:302.0px;font-weight:bold">.</div>
<div class="vc" style="left:190.5px;top:302.0px;font-weight:bold">0</div>
<div class="vc" style="left:173.2px;top:328.7px;font-weight:normal">0</div>
<div class="vc" style="left:182px;top:328.7px;font-weight:normal">.</div>
<div class="vc" style="left:190.5px;top:328.7px;font-weight:normal">5</div>
<div class="vc" style="left:173.2px;top:363.0px;font-weight:bold">0</div>
<div class="vc" style="left:182px;top:363.0px;font-weight:bold">.</div>
<div class="vc" style="left:190.5px;top:363.0px;font-weight:bold">0</div>
<div class="vc" style="left:173.2px;top:397.6px;font-weight:normal">0</div>
<div class="vc" style="left:182px;top:397.6px;font-weight:normal">.</div>
<div class="vc" style="left:190.5px;top:397.6px;font-weight:normal">5</div>
<div class="vc" style="left:173.2px;top:423.0px;font-weight:bold">1</div>
<div class="vc" style="left:182px;top:423.0px;font-weight:bold">.</div>
<div class="vc" style="left:190.5px;top:423.0px;font-weight:bold">0</div>
<svg style="left:0;top:0" width="1103" height="706"><path d="M167 268.0H172 M165 294.0H172 M167 407.6H172 M165 433.0H172" stroke="#111" stroke-width="1.3"/></svg>

<svg style="left:0;top:0" width="1103" height="706">
<g stroke="#111">
<path d="M201 200.5H205 M201 268.5H205 M201 338.5H205 M201 407.5H205" stroke-width="1"/>
<path d="M200 234H205 M200 372.5H205" stroke-width="2"/>
<path d="M199 302H205 M199 441.5H205" stroke-width="1"/>
</g>
<rect x="204.5" y="148" width="2" height="294" fill="#111"/>
</svg>
<!-- track control panel -->
<svg style="left:0;top:0" width="1103" height="706">
<path d="M16 155.5L24 163.5M24 155.5L16 163.5" stroke="#222" stroke-width="1.1"/>
<path d="M124 161.5L128.3 157.3L132.6 161.5" fill="none" stroke="#222" stroke-width="1.1"/>
<g fill="#444"><circle cx="141" cy="159.5" r="0.9"/><circle cx="146" cy="159.5" r="0.9"/><circle cx="151" cy="159.5" r="0.9"/></g>
</svg>
<div class="a" style="left:33px;top:152px;font-size:12px;line-height:15px;color:#111"><i class="c">音</i><i class="c">频</i></div>
<div class="a" style="left:65px;top:152px;font-family:'Liberation Serif',serif;font-size:13px;line-height:15px;color:#111">1</div>
<div class="btn" style="left:12px;top:170px;width:69px;height:18px;text-align:center;font-size:13px;line-height:18px"><i class="c">静</i><i class="c">音</i></div>
<div class="btn" style="left:85px;top:170px;width:69px;height:18px;text-align:center;font-size:13px;line-height:18px"><i class="c">独</i><i class="c">奏</i></div>
<div class="btn" style="left:12px;top:192px;width:142px;height:21px;text-align:center;font-size:13px;line-height:21px"><i class="c">效</i><i class="c">果</i></div>
<svg style="left:0;top:0" width="1103" height="706">
<g stroke="#c5c9d2"><path d="M19 231H149 M19 260.5H149" stroke-width="2"/>
<path d="M19 227V231 M29 227V231 M39 227V231 M49 227V231 M59 227V231 M69 227V231 M97 227V231 M107 227V231 M117 227V231 M127 227V231 M137 227V231 M148 227V231" stroke-width="1"/>
<path d="M19 256.5V260.5 M29 256.5V260.5 M39 256.5V260.5 M49 256.5V260.5 M59 256.5V260.5 M69 256.5V260.5 M97 256.5V260.5 M107 256.5V260.5 M117 256.5V260.5 M127 256.5V260.5 M137 256.5V260.5 M148 256.5V260.5" stroke-width="1"/>
</g>
<circle cx="83" cy="230.2" r="5.6" fill="#fff" stroke="#111" stroke-width="1.3"/>
<circle cx="83" cy="260" r="5.6" fill="#fff" stroke="#111" stroke-width="1.3"/>
<path d="M19 220.5H23 M141 221H146 M143.5 218.5V223.5" stroke="#111" stroke-width="1.3"/>
</svg>
<div class="a" style="left:18px;top:243px;font-size:8px;line-height:10px;font-weight:bold"><i class="c">左</i></div>
<div class="a" style="left:137px;top:243px;font-size:8px;line-height:10px;font-weight:bold"><i class="c">右</i></div>

<!-- horizontal scrollbar -->
<div class="a" style="left:4px;top:597px;width:1097px;height:1px;background:#fafafa"></div>
<div class="a" style="left:4px;top:598px;width:1097px;height:16px;background:#f0f0f0"></div>
<div class="a" style="left:210px;top:598px;width:862px;height:15px;background:#cdcdcd"></div>
<svg style="left:0;top:0" width="1103" height="706">
<path d="M205 602.2 L200 605.6 L205 609" fill="none" stroke="#555" stroke-width="1.8"/>
<path d="M1079.5 602.2 L1084.5 605.6 L1079.5 609" fill="none" stroke="#555" stroke-width="1.8"/>
</svg>
<!-- bottom toolbar -->
<div class="a" style="left:4px;top:614px;width:1097px;height:65px;background:#f7f7f8"></div>
<div class="a" style="left:4px;top:678px;width:1097px;height:1px;background:#e2e2e2"></div>
<div class="a" style="left:634px;top:613px;width:1px;height:65px;background:#e4e4e4"></div>
<div class="a" style="left:637px;top:613px;width:1px;height:65px;background:#e4e4e4"></div>
<div class="a" style="left:1092px;top:613px;width:1px;height:65px;background:#e4e4e4"></div>
<div class="a" style="left:906px;top:646px;width:186px;height:1px;background:#e2e2e2"></div>
<svg style="left:0;top:0" width="1103" height="706"><g fill="#9a9a9a">
<circle cx="7" cy="640" r="1.1"/><circle cx="12.4" cy="640" r="1.1"/><circle cx="7" cy="645" r="1.1"/><circle cx="12.4" cy="645" r="1.1"/><circle cx="7" cy="650" r="1.1"/><circle cx="12.4" cy="650" r="1.1"/><circle cx="219" cy="640" r="1.1"/><circle cx="224" cy="640" r="1.1"/><circle cx="219" cy="644.5" r="1.1"/><circle cx="224" cy="644.5" r="1.1"/><circle cx="219" cy="649.5" r="1.1"/><circle cx="224" cy="649.5" r="1.1"/><circle cx="390.5" cy="640" r="1.1"/><circle cx="396" cy="640" r="1.1"/><circle cx="390.5" cy="645" r="1.1"/><circle cx="396" cy="645" r="1.1"/><circle cx="390.5" cy="650" r="1.1"/><circle cx="396" cy="650" r="1.1"/><circle cx="641" cy="640" r="1.1"/><circle cx="647.6" cy="640" r="1.1"/><circle cx="641" cy="644.5" r="1.1"/><circle cx="647.6" cy="644.5" r="1.1"/><circle cx="641" cy="649" r="1.1"/><circle cx="647.6" cy="649" r="1.1"/><circle cx="907.6" cy="623.7" r="1.1"/><circle cx="913" cy="623.7" r="1.1"/><circle cx="907.6" cy="628.6" r="1.1"/><circle cx="913" cy="628.6" r="1.1"/><circle cx="907.6" cy="633.5" r="1.1"/><circle cx="913" cy="633.5" r="1.1"/></g></svg>
<div class="a" style="left:20px;top:626px;font-family:'Liberation Mono',monospace;font-size:10px;line-height:12px;color:#111">Tempo</div>
<div class="a" style="left:86px;top:626px;font-family:'Liberation Mono',monospace;font-size:10px;line-height:12px;color:#111">Time Signature</div>
<div class="a" style="left:20px;top:642px;width:43px;height:25px;border:1px solid #cfcfcf;background:#f0f0f0;font-size:13px;line-height:23px;color:#9a9a9a;padding-left:5px">120</div>
<div class="a" style="left:64px;top:643px;width:15px;height:12px;border:1px solid #dedede;background:#f2f2f2"></div>
<div class="a" style="left:64px;top:655px;width:15px;height:12px;border:1px solid #dedede;background:#f2f2f2"></div>
<div class="a" style="left:86px;top:642px;width:33px;height:25px;border:1px solid #444;background:#fff;font-size:13px;line-height:23px;color:#111;padding-left:4px">4</div>
<div class="a" style="left:120px;top:643px;width:15px;height:12px;border:1px solid #b8b8b8;background:#f4f4f4"></div>
<div class="a" style="left:120px;top:655px;width:15px;height:12px;border:1px solid #b8b8b8;background:#f4f4f4"></div>
<svg style="left:0;top:0" width="1103" height="706">
<path d="M68.5 651.5 L71.5 648 L74.5 651.5Z M68.5 658.5 L71.5 662 L74.5 658.5Z" fill="#a8a8a8"/>
<path d="M124.5 651.5 L127.5 648 L130.5 651.5Z M124.5 658.5 L127.5 662 L130.5 658.5Z" fill="#111"/>
<path d="M148 648 L143.5 661.5" stroke="#111" stroke-width="1.1"/>
</svg>
<div class="a" style="left:155px;top:642px;width:50px;height:25px;border:1px solid #bcbcbc;background:#e4e4e4;font-size:13px;line-height:23px;color:#111;padding-left:4px">4</div>
<div class="a" style="left:232px;top:624px;width:13px;height:13px;border:1px solid #333;background:#fff"></div>
<div class="a" style="left:248px;top:624px;font-family:'Liberation Mono',monospace;font-size:10px;line-height:12px;color:#111">Snap</div>
<div class="a" style="left:232px;top:645px;width:150px;height:25px;border:1px solid #7a7a7a;background:#fff"></div>
<div class="a" style="left:237px;top:650px;width:126px;height:16px;background:#efefef;font-size:13px;line-height:16px;color:#a0a0a0;padding-left:1px">1/8</div>
<svg style="left:0;top:0" width="1103" height="706"><path d="M192 652.5 L196 656.5 L200 652.5" fill="none" stroke="#555" stroke-width="1"/>
<path d="M368.5 655 L372.5 659 L376.5 655" fill="none" stroke="#aaa" stroke-width="1"/>
</svg>
<!-- time display -->
<div class="a" style="left:401px;top:631px;width:230px;height:30px;border:1px solid #bdbdbd;background:#fff"></div>
<div class="a" style="left:403px;top:633px;width:226px;height:26px;background:#2e2f44"></div>
<!-- selection -->
<div class="a" style="left:655px;top:619px;font-size:12px;line-height:15px;color:#111"><i class="c">选</i><i class="c">区</i></div>
<div class="btn" style="left:656px;top:644px;width:23px;height:23px;background:#dedee3"></div>
<svg style="left:0;top:0" width="1103" height="706">
<g transform="translate(667.5,655.5)" fill="none" stroke="#222" stroke-width="1.1">
<path d="M-1.2 -6 h2.4 l0.5 1.8 l1.6 0.9 l1.8 -0.6 l1.2 2.1 l-1.3 1.3 v1.8 l1.3 1.3 l-1.2 2.1 l-1.8 -0.6 l-1.6 0.9 l-0.5 1.8 h-2.4 l-0.5 -1.8 l-1.6 -0.9 l-1.8 0.6 l-1.2 -2.1 l1.3 -1.3 v-1.8 l-1.3 -1.3 l1.2 -2.1 l1.8 0.6 l1.6 -0.9 z"/>
<circle r="2"/>
</g></svg>
<div class="a" style="left:685px;top:620px;width:214px;height:22px;border:1px solid #bdbdbd;background:#fff"></div>
<div class="a" style="left:687px;top:622px;width:210px;height:19px;background:#2e2f44"></div>
<div class="a" style="left:685px;top:644px;width:214px;height:23px;border:1px solid #bdbdbd;background:#fff"></div>
<div class="a" style="left:687px;top:646px;width:210px;height:19px;background:#2e2f44"></div>
<div class="a td" style="left:404.9px;top:636px;font-size:23px;line-height:23px;transform:scaleX(0.8);transform-origin:0 0">0</div><div class="a td" style="left:419.4px;top:636px;font-size:23px;line-height:23px;transform:scaleX(0.8);transform-origin:0 0">0</div><div class="a td" style="left:477.9px;top:636px;font-size:23px;line-height:23px;transform:scaleX(0.8);transform-origin:0 0">0</div><div class="a td" style="left:492.4px;top:636px;font-size:23px;line-height:23px;transform:scaleX(0.8);transform-origin:0 0">0</div><div class="a td" style="left:550.8px;top:636px;font-size:23px;line-height:23px;transform:scaleX(0.8);transform-origin:0 0">0</div><div class="a td" style="left:565.3px;top:636px;font-size:23px;line-height:23px;transform:scaleX(0.8);transform-origin:0 0">4</div><div class="a tc" style="left:446px;top:637px;font-size:19px;line-height:20px"><i class="c">时</i></div><div class="a tc" style="left:518.5px;top:637px;font-size:19px;line-height:20px"><i class="c">分</i></div><div class="a tc" style="left:591.5px;top:637px;font-size:19px;line-height:20px"><i class="c">秒</i></div><svg style="left:0;top:0" width="1103" height="706"><g fill="#f0f0f4"><path d="M618 642.5 H627 L622.5 648.5Z"/><path d="M886.3 629 H895 L890.6 633.8Z"/><path d="M886.3 653 H895 L890.6 657.8Z"/></g></svg><div class="a td" style="left:689.2px;top:624px;font-size:15.5px;line-height:15.5px;transform:scaleX(1);transform-origin:0 0">0</div><div class="a td" style="left:699.9000000000001px;top:624px;font-size:15.5px;line-height:15.5px;transform:scaleX(1);transform-origin:0 0">0</div><div class="a td" style="left:742.3000000000001px;top:624px;font-size:15.5px;line-height:15.5px;transform:scaleX(1);transform-origin:0 0">0</div><div class="a td" style="left:753.2px;top:624px;font-size:15.5px;line-height:15.5px;transform:scaleX(1);transform-origin:0 0">0</div><div class="a td" style="left:795.2px;top:624px;font-size:15.5px;line-height:15.5px;transform:scaleX(1);transform-origin:0 0">0</div><div class="a td" style="left:806.1px;top:624px;font-size:15.5px;line-height:15.5px;transform:scaleX(1);transform-origin:0 0">0</div><div class="a td" style="left:816.2px;top:624px;font-size:15.5px;line-height:15.5px;transform:scaleX(1);transform-origin:0 0">.</div><div class="a td" style="left:825.1px;top:624px;font-size:15.5px;line-height:15.5px;transform:scaleX(1);transform-origin:0 0">0</div><div class="a td" style="left:836.0px;top:624px;font-size:15.5px;line-height:15.5px;transform:scaleX(1);transform-origin:0 0">0</div><div class="a td" style="left:846.9000000000001px;top:624px;font-size:15.5px;line-height:15.5px;transform:scaleX(1);transform-origin:0 0">0</div><div class="a tc" style="left:718.3px;top:625px;font-size:13px;line-height:14px"><i class="c">时</i></div><div class="a tc" style="left:772px;top:625px;font-size:13px;line-height:14px"><i class="c">分</i></div><div class="a tc" style="left:866px;top:625px;font-size:13px;line-height:14px"><i class="c">秒</i></div><div class="a td" style="left:689.2px;top:648px;font-size:15.5px;line-height:15.5px;transform:scaleX(1);transform-origin:0 0">0</div><div class="a td" style="left:699.9000000000001px;top:648px;font-size:15.5px;line-height:15.5px;transform:scaleX(1);transform-origin:0 0">0</div><div class="a td" style="left:742.3000000000001px;top:648px;font-size:15.5px;line-height:15.5px;transform:scaleX(1);transform-origin:0 0">0</div><div class="a td" style="left:753.2px;top:648px;font-size:15.5px;line-height:15.5px;transform:scaleX(1);transform-origin:0 0">0</div><div class="a td" style="left:795.2px;top:648px;font-size:15.5px;line-height:15.5px;transform:scaleX(1);transform-origin:0 0">0</div><div class="a td" style="left:806.1px;top:648px;font-size:15.5px;line-height:15.5px;transform:scaleX(1);transform-origin:0 0">0</div><div class="a td" style="left:816.2px;top:648px;font-size:15.5px;line-height:15.5px;transform:scaleX(1);transform-origin:0 0">.</div><div class="a td" style="left:825.1px;top:648px;font-size:15.5px;line-height:15.5px;transform:scaleX(1);transform-origin:0 0">0</div><div class="a td" style="left:836.0px;top:648px;font-size:15.5px;line-height:15.5px;transform:scaleX(1);transform-origin:0 0">0</div><div class="a td" style="left:846.9000000000001px;top:648px;font-size:15.5px;line-height:15.5px;transform:scaleX(1);transform-origin:0 0">0</div><div class="a tc" style="left:718.3px;top:649px;font-size:13px;line-height:14px"><i class="c">时</i></div><div class="a tc" style="left:772px;top:649px;font-size:13px;line-height:14px"><i class="c">分</i></div><div class="a tc" style="left:866px;top:649px;font-size:13px;line-height:14px"><i class="c">秒</i></div>
<!-- play at speed -->
<div class="btn" style="left:916px;top:617px;width:27px;height:27px;background:#dedee3"></div>
<svg style="left:0;top:0" width="1103" height="706">
<path d="M923 623.5 L936 630.5 L923 637.5Z" fill="#a9bbc7"/>
<g stroke="#c5c9d2"><path d="M948.5 635H1085.5" stroke-width="2"/>
<path d="M949 631V635 M959 631V635 M969 631V635 M979 631V635 M1008 631V635 M1018 631V635 M1028 631V635 M1038 631V635 M1048 631V635 M1058 631V635 M1068 631V635 M1078 631V635 M1085 631V635" stroke-width="1"/></g>
<circle cx="994" cy="634.3" r="6" fill="#fff" stroke="#111" stroke-width="1.3"/>
<path d="M948.5 624.5H953 M1077.5 624.5H1083 M1080.3 622V627" stroke="#111" stroke-width="1.2"/>
</svg>
<!-- status bar -->
<div class="a" style="left:4px;top:679px;width:1097px;height:22px;background:#f0f0f0"></div>
<div class="a" style="left:12px;top:680px;width:1px;height:20px;background:#dadada"></div>
<div class="a" style="left:188px;top:680px;width:1px;height:20px;background:#dadada"></div>
<div class="a" style="left:917px;top:680px;width:1px;height:20px;background:#dadada"></div>
<div class="a" style="left:17px;top:685px;font-size:12px;line-height:15px;color:#111"><i class="c">录</i><i class="c">音</i>.</div>
<div class="a" style="left:193px;top:685px;font-size:12px;line-height:15px;color:#111"><i class="c">点</i><i class="c">击</i><i class="c">并</i><i class="c">拖</i><i class="c">动</i><i class="c">选</i><i class="c">择</i><i class="c">音</i><i class="c">频</i></div>
<!-- watermark -->
<div class="a" style="left:980px;top:653px;font-size:18.5px;line-height:20px;font-weight:bold;color:#fdfdfd;text-shadow:0 0 2px rgba(0,0,0,0.28),1px 1px 2px rgba(0,0,0,0.2);letter-spacing:-0.6px;white-space:nowrap"><i class="c">吾</i><i class="c">爱</i><i class="c">破</i><i class="c">解</i><i class="c">论</i><i class="c">坛</i></div>
<div class="a" style="left:981px;top:677px;font-size:15px;line-height:17px;font-weight:bold;color:rgba(255,255,255,0.8);text-shadow:0 0 2px rgba(0,0,0,0.18),1px 1px 2px rgba(0,0,0,0.12);letter-spacing:-0.6px;white-space:nowrap">www.52pojie.cn</div>
<div class="a" style="left:922px;top:685px;font-size:12px;line-height:15px;color:#111"><i class="c">实</i><i class="c">际</i><i class="c">采</i><i class="c">样</i><i class="c">率</i><i class="c">：</i> 44100</div>
</body></html>
